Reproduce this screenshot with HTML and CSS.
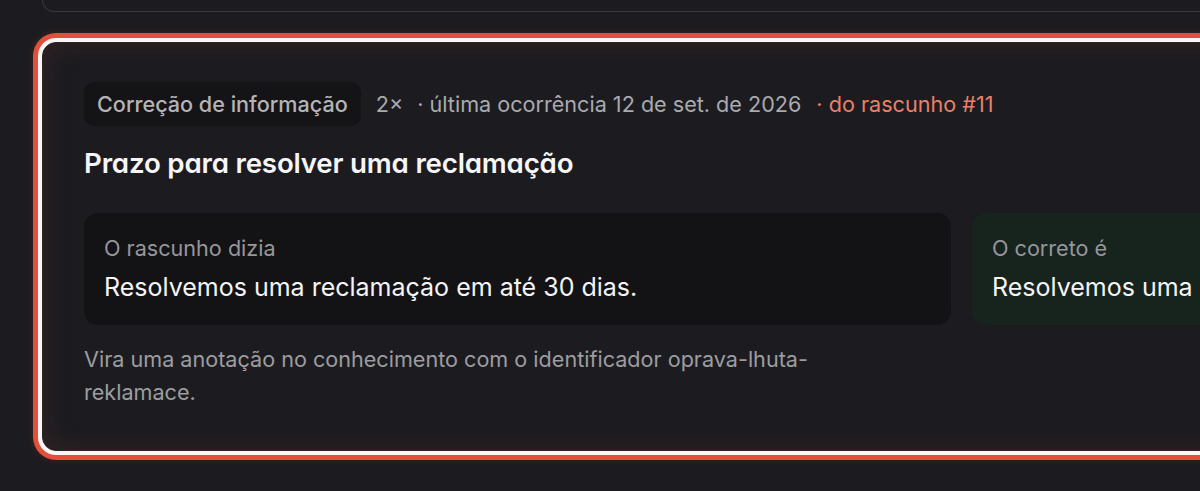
FILE: index.html
```html
<!DOCTYPE html>
<html lang="pt">
<head>
<meta charset="utf-8">
<link rel="stylesheet" href="styles.css">
</head>
<body>
<div class="page">
  <div class="prev-card"></div>
  <article class="card">
    <div class="meta">
      <span class="chip">Correção de informação</span>
      <span class="count">2×</span>
      <span class="meta-item">· última ocorrência 12 de set. de 2026</span>
      <span class="meta-item source">· do rascunho #11</span>
    </div>
    <h2 class="title">Prazo para resolver uma reclamação</h2>
    <div class="compare">
      <div class="box box-old">
        <div class="box-label">O rascunho dizia</div>
        <div class="box-value">Resolvemos uma reclamação em até 30 dias.</div>
      </div>
      <div class="box box-new">
        <div class="box-label">O correto é</div>
        <div class="box-value">Resolvemos uma reclamação em até 14 dias.</div>
      </div>
    </div>
    <p class="note">Vira uma anotação no conhecimento com o identificador oprava-lhuta-reklamace.</p>
  </article>
</div>
</body>
</html>
```
FILE: styles.css
```css
* { box-sizing: border-box; }
html {
  overflow: hidden;
  background: #1c1c20;
}
body {
  margin: 0;
  padding: 0;
  background: #1c1c20;
  font-family: "Inter", "Noto Sans", sans-serif;
}
.page {
  padding-left: 42px;
  padding-bottom: 40px;
  width: 2000px;
}
.prev-card {
  height: 12px;
  width: 1800px;
  border: 1px solid #38383d;
  border-top: none;
  border-radius: 0 0 16px 16px;
}
.card {
  margin-top: 30px;
  width: 1840px;
  border: 1px solid #2c2426;
  border-radius: 14px;
  background: #1c1c20;
  padding: 39px 41px 41px 41px;
  box-shadow:
    0 0 0 4px #fbf6f5,
    0 0 0 9px #e0503a,
    0 0 6px 10px rgba(224, 80, 58, 0.12),
    inset 0 0 26px rgba(200, 80, 50, 0.14);
}
.meta {
  display: flex;
  align-items: center;
  font-size: 21.6px;
  line-height: 26px;
  color: #a9a9ae;
}
.chip {
  background: #141417;
  color: #b4b4b8;
  padding: 9px 13px;
  border-radius: 10px;
  font-weight: 500;
  margin-right: 15px;
}
.count { margin-right: 14px; }
.meta-item { margin-right: 15px; }
.source { color: #e8806a; }
.title {
  margin: 20px 0 0 0;
  font-size: 27.7px;
  line-height: 34px;
  font-weight: 600;
  color: #f6f6f8;
  font-feature-settings: "cv11" 1;
  letter-spacing: -0.2px;
}
.compare {
  display: grid;
  grid-template-columns: 867px 867px;
  gap: 21px;
  margin-top: 33px;
}
.box {
  border-radius: 14px;
  padding: 22px 20px 0 20px;
  height: 112px;
}
.box-old { background: #131315; }
.box-new { background: #17231d; }
.box-label {
  font-size: 21.6px;
  line-height: 26px;
  color: #96969b;
}
.box-value {
  margin-top: 11px;
  font-size: 25px;
  line-height: 30px;
  color: #f4f4f6;
}
.note {
  margin: 18px 0 0 0;
  max-width: 740px;
  font-size: 21.6px;
  line-height: 33px;
  color: #9c9ca1;
}
```
